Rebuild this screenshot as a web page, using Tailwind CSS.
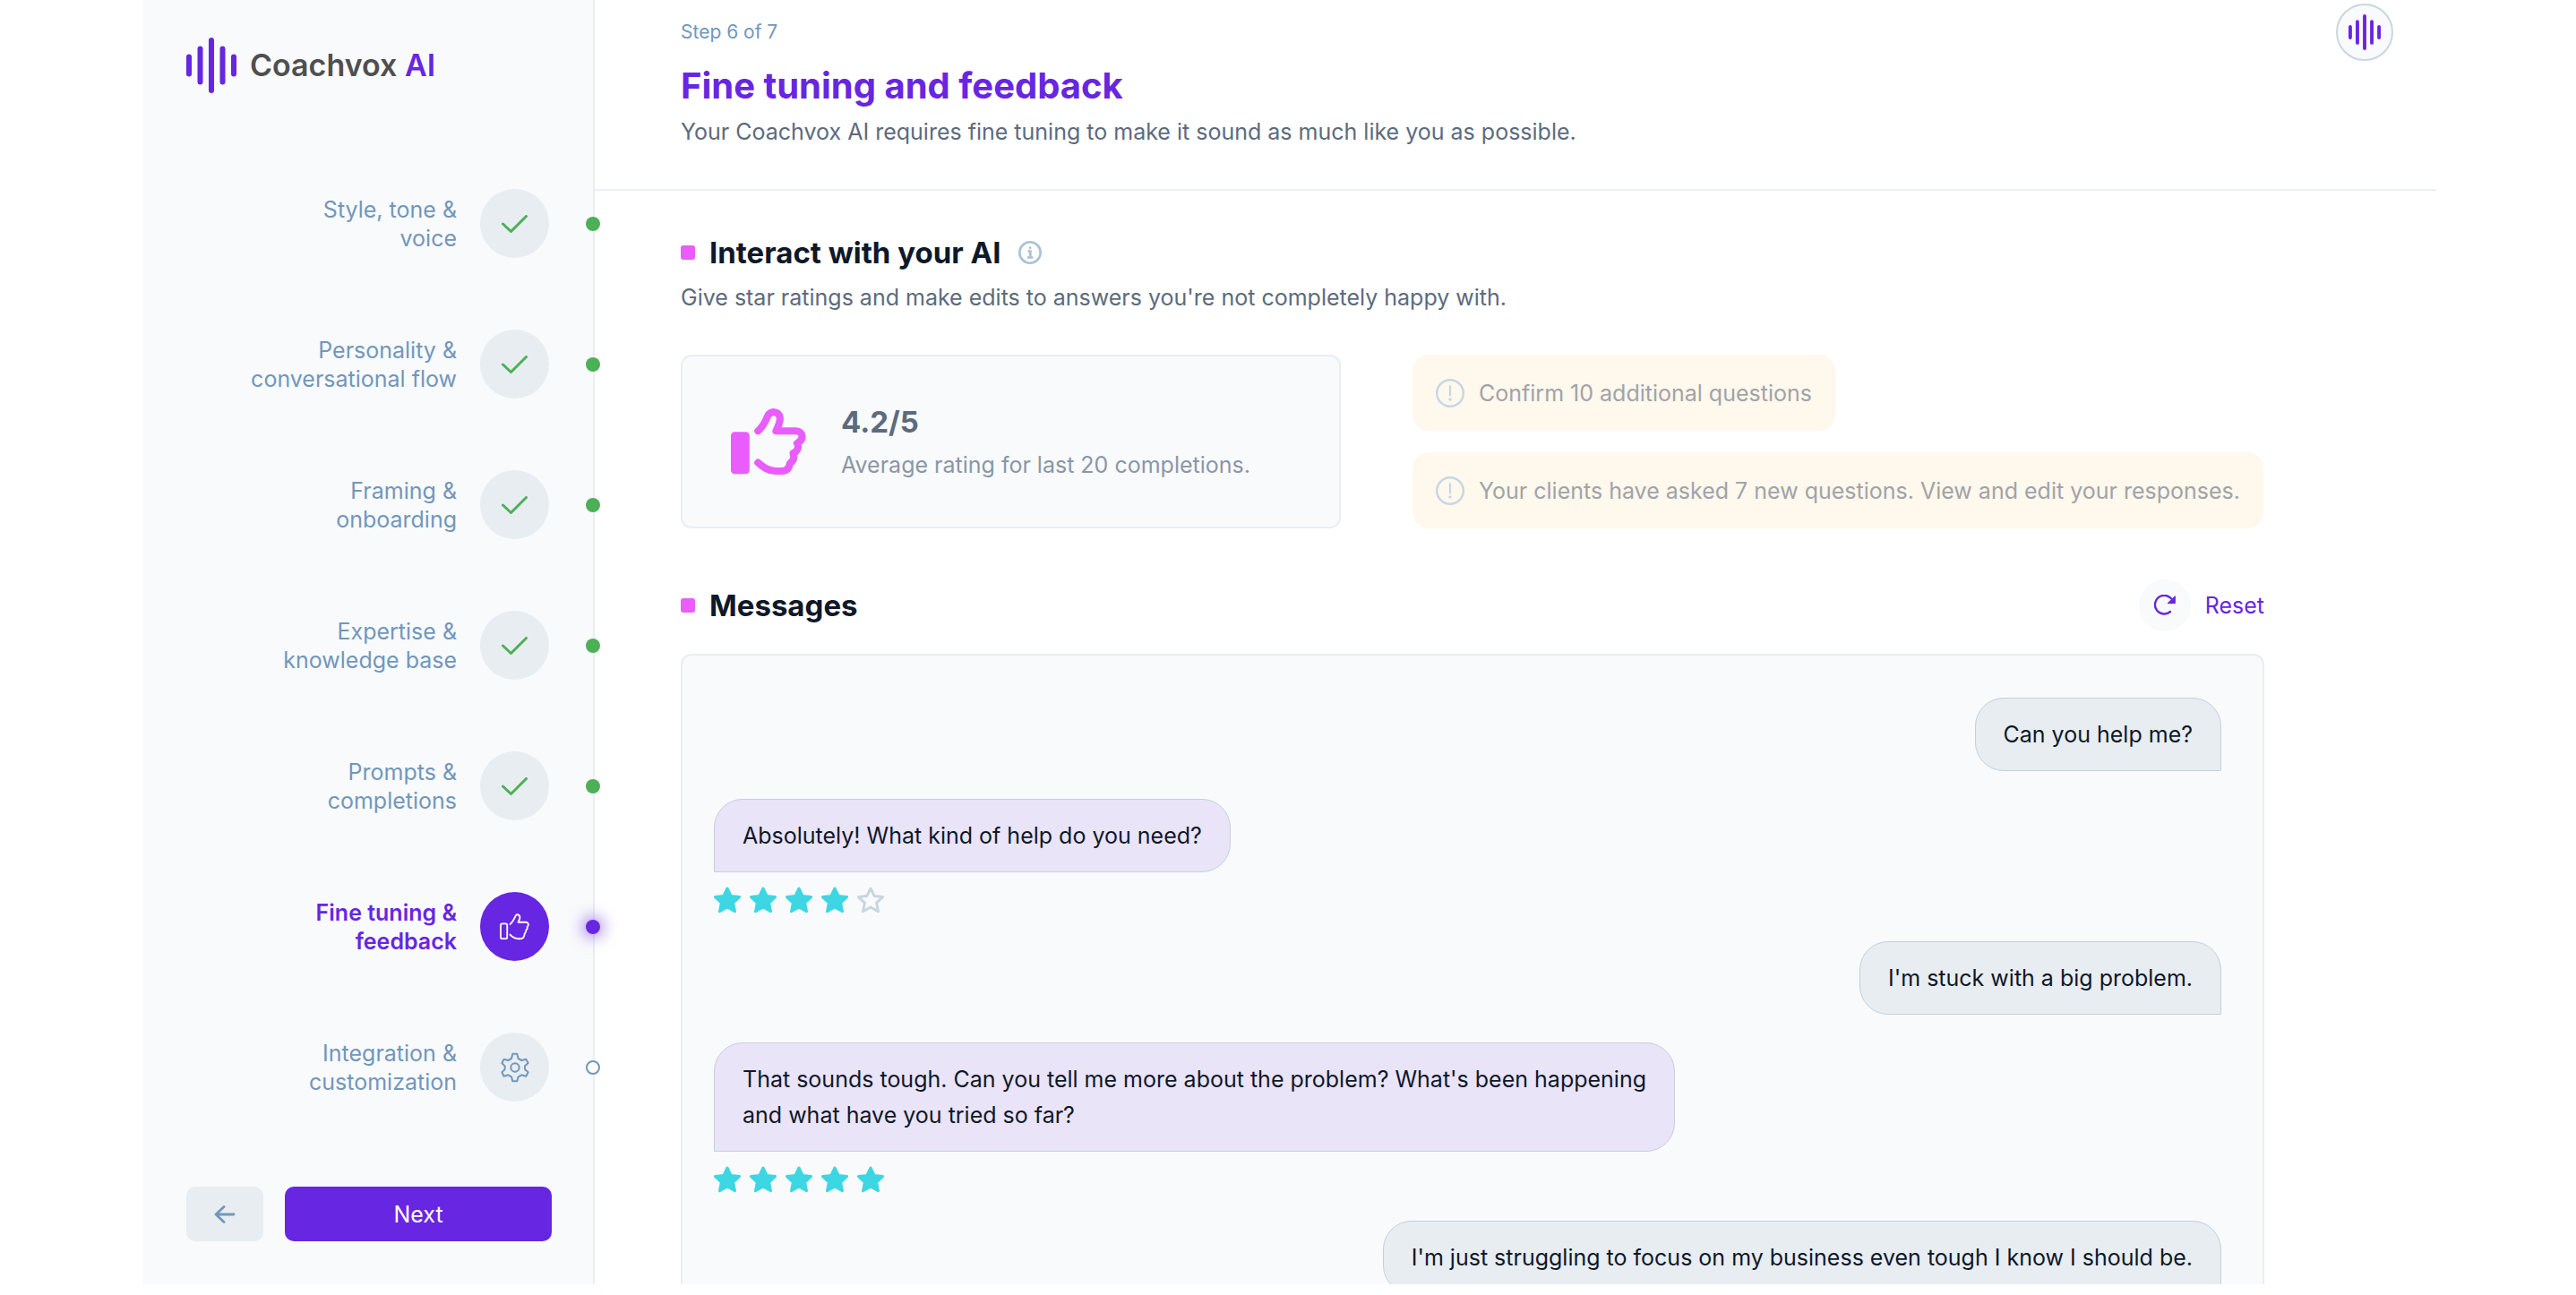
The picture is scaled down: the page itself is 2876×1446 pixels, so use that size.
<!DOCTYPE html>
<html lang="en">
<head>
  <meta charset="UTF-8" />
  <meta name="viewport" content="width=device-width, initial-scale=1.0"/>
  <title>Coachvox AI - Fine tuning and feedback</title>
  <script src="https://cdn.jsdelivr.net/npm/@tailwindcss/browser@4"></script>
</head>
<body class="bg-white font-['Inter',sans-serif] text-[25px]/[32px] text-[#5c6b7d]">

  <!-- shared icons -->
  <svg class="hidden">
    <symbol id="wave" viewBox="0 0 56 62">
      <g stroke="currentColor" stroke-width="6" stroke-linecap="round">
        <path d="M3 21.500v19M15.500 12.500v37M28 3v56M40.500 12.500v37M53 21.500v19"/>
      </g>
    </symbol>
    <symbol id="check" viewBox="0 0 29 20">
      <path d="M1.500 10l9 8.500L27.500 1.500" fill="none" stroke="currentColor" stroke-width="3" stroke-linecap="round" stroke-linejoin="round"/>
    </symbol>
    <symbol id="alert" viewBox="0 0 32 32">
      <circle cx="16" cy="16" r="14.800" fill="none" stroke="currentColor" stroke-width="2.400"/>
      <path d="M16 8v10.500" stroke="currentColor" stroke-width="2.200" stroke-linecap="round"/>
      <circle cx="16" cy="23" r="1.700" fill="currentColor"/>
    </symbol>
    <symbol id="star" viewBox="0 0 30 30">
      <path d="M15 2l4.100 8.400 9.400 1.200-6.900 6.500 1.900 9.600-8.500-4.700-8.500 4.700 1.900-9.600-6.900-6.500 9.400-1.200z" stroke="currentColor" stroke-width="3" stroke-linejoin="round"/>
    </symbol>
  </svg>

  <div class="flex h-screen pl-40 pr-[156px] pb-3">

    <!-- sidebar -->
    <aside class="flex w-[504px] shrink-0 flex-col border-r-2 border-[#e9eef3] bg-[#f9fafc] pt-[42px] pb-12">
      <a href="#" class="ml-12 flex items-center gap-[15px] text-[34px]/[40px] font-semibold text-[#4f4f4f]">
        <svg class="h-[62px] w-14 text-[#6726e2]"><use href="#wave"/></svg>
        <span>Coachvox <span class="text-[#6726e2]">AI</span></span>
      </a>

      <ol class="mt-[107px] flex flex-col gap-20 text-right text-[#7197bb]">
        <li class="relative flex items-center justify-end gap-[26px] pr-[49px]">
          <a href="#">Style, tone &amp;<br>voice</a>
          <span class="flex size-[77px] items-center justify-center rounded-full bg-[#e8edf1] text-[#4cb056]"><svg class="h-5 w-[29px]"><use href="#check"/></svg></span>
          <span class="absolute -right-2 size-4 rounded-full bg-[#4cb056]"></span>
        </li>
        <li class="relative flex items-center justify-end gap-[26px] pr-[49px]">
          <a href="#">Personality &amp;<br>conversational flow</a>
          <span class="flex size-[77px] items-center justify-center rounded-full bg-[#e8edf1] text-[#4cb056]"><svg class="h-5 w-[29px]"><use href="#check"/></svg></span>
          <span class="absolute -right-2 size-4 rounded-full bg-[#4cb056]"></span>
        </li>
        <li class="relative flex items-center justify-end gap-[26px] pr-[49px]">
          <a href="#">Framing &amp;<br>onboarding</a>
          <span class="flex size-[77px] items-center justify-center rounded-full bg-[#e8edf1] text-[#4cb056]"><svg class="h-5 w-[29px]"><use href="#check"/></svg></span>
          <span class="absolute -right-2 size-4 rounded-full bg-[#4cb056]"></span>
        </li>
        <li class="relative flex items-center justify-end gap-[26px] pr-[49px]">
          <a href="#">Expertise &amp;<br>knowledge base</a>
          <span class="flex size-[77px] items-center justify-center rounded-full bg-[#e8edf1] text-[#4cb056]"><svg class="h-5 w-[29px]"><use href="#check"/></svg></span>
          <span class="absolute -right-2 size-4 rounded-full bg-[#4cb056]"></span>
        </li>
        <li class="relative flex items-center justify-end gap-[26px] pr-[49px]">
          <a href="#">Prompts &amp;<br>completions</a>
          <span class="flex size-[77px] items-center justify-center rounded-full bg-[#e8edf1] text-[#4cb056]"><svg class="h-5 w-[29px]"><use href="#check"/></svg></span>
          <span class="absolute -right-2 size-4 rounded-full bg-[#4cb056]"></span>
        </li>
        <li class="relative flex items-center justify-end gap-[26px] pr-[49px]">
          <a href="#" aria-current="step" class="font-semibold text-[#6726e2]">Fine tuning &amp;<br>feedback</a>
          <span class="flex size-[77px] items-center justify-center rounded-full bg-[#6726e2] text-white">
            <svg class="h-[30px] w-[33px]" viewBox="95 100 100 90" fill="none" stroke="currentColor" stroke-width="5.500" stroke-linecap="round" stroke-linejoin="round">
              <rect x="98" y="134" width="22" height="51" rx="5"/>
              <path d="M130 136C142 126 144 116 148 108C152 100 163 103 163 113C163 120 159 124 157 129H184C193 130 194 140 188 144C189 151 187 154 184 156C184 162 181 165 179 168C178 178 175 184 167 185C150 186 138 181 130 171"/>
            </svg>
          </span>
          <span class="absolute -right-2 size-4 rounded-full bg-[#6726e2] shadow-[0_0_16px_4px_#6726e280]"></span>
        </li>
        <li class="relative flex items-center justify-end gap-[26px] pr-[49px]">
          <a href="#">Integration &amp;<br>customization</a>
          <span class="flex size-[77px] items-center justify-center rounded-full bg-[#e8edf1]">
            <svg class="h-[34px] w-8" viewBox="98 564 96 102" fill="none" stroke="currentColor" stroke-width="6" stroke-linejoin="round">
              <path d="M138 569H153L157 585L168 591L183 587L190 600L179 610V621L190 631L183 644L168 640L157 646L153 661H138L134 646L123 640L109 644L102 631L112 621V610L102 600L109 587L123 591L134 585Z"/>
              <circle cx="146" cy="615" r="14"/>
            </svg>
          </span>
          <span class="absolute -right-2 size-4 rounded-full border-2 border-[#7197bb] bg-white"></span>
        </li>
      </ol>

      <div class="mt-auto flex gap-6 pl-12 pr-[46px]">
        <button type="button" aria-label="Back" class="flex h-[61px] w-[86px] items-center justify-center rounded-[10px] bg-[#e8edf1] text-[#7197bb]">
          <svg class="h-5 w-6" viewBox="0 0 24 20" fill="none" stroke="currentColor" stroke-width="2.800" stroke-linecap="round" stroke-linejoin="round"><path d="M22 10H2M11 1.500L2 10l9 8.500"/></svg>
        </button>
        <button type="button" class="h-[61px] flex-1 rounded-[10px] bg-[#6726e2] text-white">Next</button>
      </div>
    </aside>

    <!-- content -->
    <main class="flex min-w-0 flex-1 flex-col overflow-hidden">
      <header class="flex shrink-0 items-start justify-between border-b-2 border-[#ecf0f4] pl-24 pr-12 pb-12">
        <div class="pt-5">
          <p class="text-[21px]/[32px] text-[#7197bb]">Step 6 of 7</p>
          <h1 class="mt-4 text-[40px]/[56px] font-bold text-[#6726e2]">Fine tuning and feedback</h1>
          <p class="mt-[7px]">Your Coachvox AI requires fine tuning to make it sound as much like you as possible.</p>
        </div>
        <button type="button" aria-label="Account" class="mt-1 flex size-16 items-center justify-center rounded-full border-2 border-[#cbd6df] bg-[#f9fafc] text-[#6726e2]">
          <svg class="h-10 w-9"><use href="#wave"/></svg>
        </button>
      </header>

      <div class="flex min-h-0 flex-1 flex-col pl-24 pr-48">
        <h2 class="mt-[45px] flex shrink-0 items-center text-[33px]/[48px] font-bold text-[#0f1829]">
          <span class="mr-4 size-4 rounded-[3px] bg-[#e85dfb]"></span>
          Interact with your AI
          <svg class="ml-5 size-[26px] text-[#a9c1d9]" viewBox="0 0 26 26" fill="none" stroke="currentColor" stroke-width="2.600">
            <circle cx="13" cy="13" r="11.700"/>
            <path d="M10.500 11.500H13.400V18M10 18.500h6.500"/>
            <circle cx="13" cy="7.800" r="1" fill="currentColor" stroke-width="1"/>
          </svg>
        </h2>
        <p class="mt-[10px] shrink-0">Give star ratings and make edits to answers you're not completely happy with.</p>

        <div class="mt-12 flex shrink-0 justify-between">
          <div class="flex w-[737px] items-center gap-[39px] rounded-xl border-2 border-[#e9eef2] bg-[#f9fafc] pl-[54px]">
            <svg class="h-[74px] w-[84px] text-[#e85dfb]" viewBox="48 48 250 220" fill="none" stroke="currentColor" stroke-width="24" stroke-linecap="round" stroke-linejoin="round">
              <rect x="48" y="126" width="62" height="140" rx="13" fill="currentColor" stroke="none"/>
              <path d="M138 123C158 106 164 86 170 74C178 54 208 56 211 78C213 94 204 108 198 123H264C290 124 292 152 268 164C276 178 268 192 255 197C260 212 254 224 244 231C242 248 234 255 220 256H196C168 255 152 240 138 228"/>
            </svg>
            <div>
              <p class="text-[33px]/[40px] font-bold">4.2/5</p>
              <p class="mt-3 text-[#8a97a6]">Average rating for last 20 completions.</p>
            </div>
          </div>
          <div class="flex w-[951px] flex-col items-start gap-6 text-[#a0a3a9]">
            <a href="#" class="flex h-[85px] items-center gap-4 rounded-[18px] bg-[#fff8ec] px-[26px]">
              <svg class="size-8 text-[#c5d6e4]"><use href="#alert"/></svg>
              Confirm 10 additional questions
            </a>
            <a href="#" class="flex h-[85px] items-center gap-4 whitespace-nowrap rounded-[18px] bg-[#fff8ec] px-[26px]">
              <svg class="size-8 text-[#c5d6e4]"><use href="#alert"/></svg>
              Your clients have asked 7 new questions. View and edit your responses.
            </a>
          </div>
        </div>

        <div class="mt-[57px] flex shrink-0 items-center justify-between">
          <h2 class="flex items-center gap-4 text-[33px]/[48px] font-bold text-[#0f1829]">
            <span class="size-4 rounded-[3px] bg-[#e85dfb]"></span>
            Messages
          </h2>
          <button type="button" class="flex items-center gap-4 text-[#6726e2]">
            <span class="flex size-[58px] items-center justify-center rounded-full bg-[#f9fafc]">
              <svg class="size-6" viewBox="79 88 72 72">
                <path d="M133 145A31 31 0 1 1 136 101" fill="none" stroke="currentColor" stroke-width="7" stroke-linecap="round"/>
                <path d="M149 93V117H124Z" fill="currentColor" stroke="currentColor" stroke-width="3" stroke-linejoin="round"/>
              </svg>
            </span>
            Reset
          </button>
        </div>

        <section class="mt-[25px] flex min-h-0 flex-1 flex-col gap-[31px] overflow-hidden rounded-t-xl border-2 border-b-0 border-[#e9eef2] bg-[#f9fafc] pt-[47px] pl-[35px] pr-[46px] leading-[40px] text-[#0f1829]">
          <p class="shrink-0 self-end rounded-[32px] rounded-br-none border border-[#c3d0da] bg-[#e8edf1] px-[31px] py-5">Can you help me?</p>

          <div class="shrink-0">
            <p class="w-fit max-w-[1120px] rounded-[32px] rounded-bl-none border border-[#c3d0da] bg-[#eae4f8] px-[31px] py-5">Absolutely! What kind of help do you need?</p>
            <div role="img" aria-label="4 of 5 stars" class="mt-4 flex gap-[10px] text-[#3dd6e3]">
              <svg class="size-[30px] fill-current"><use href="#star"/></svg>
              <svg class="size-[30px] fill-current"><use href="#star"/></svg>
              <svg class="size-[30px] fill-current"><use href="#star"/></svg>
              <svg class="size-[30px] fill-current"><use href="#star"/></svg>
              <svg class="size-[30px] fill-none text-[#c9d5df]"><use href="#star"/></svg>
            </div>
          </div>

          <p class="shrink-0 self-end rounded-[32px] rounded-br-none border border-[#c3d0da] bg-[#e8edf1] px-[31px] py-5">I'm stuck with a big problem.</p>

          <div class="shrink-0">
            <p class="w-fit max-w-[1120px] rounded-[32px] rounded-bl-none border border-[#c3d0da] bg-[#eae4f8] px-[31px] py-5">That sounds tough. Can you tell me more about the problem? What's been happening<br>and what have you tried so far?</p>
            <div role="img" aria-label="5 of 5 stars" class="mt-4 flex gap-[10px] text-[#3dd6e3]">
              <svg class="size-[30px] fill-current"><use href="#star"/></svg>
              <svg class="size-[30px] fill-current"><use href="#star"/></svg>
              <svg class="size-[30px] fill-current"><use href="#star"/></svg>
              <svg class="size-[30px] fill-current"><use href="#star"/></svg>
              <svg class="size-[30px] fill-current"><use href="#star"/></svg>
            </div>
          </div>

          <p class="shrink-0 self-end rounded-[32px] rounded-br-none border border-[#c3d0da] bg-[#e8edf1] px-[31px] py-5">I'm just struggling to focus on my business even tough I know I should be.</p>
        </section>
      </div>
    </main>
  </div>
</body>
</html>
